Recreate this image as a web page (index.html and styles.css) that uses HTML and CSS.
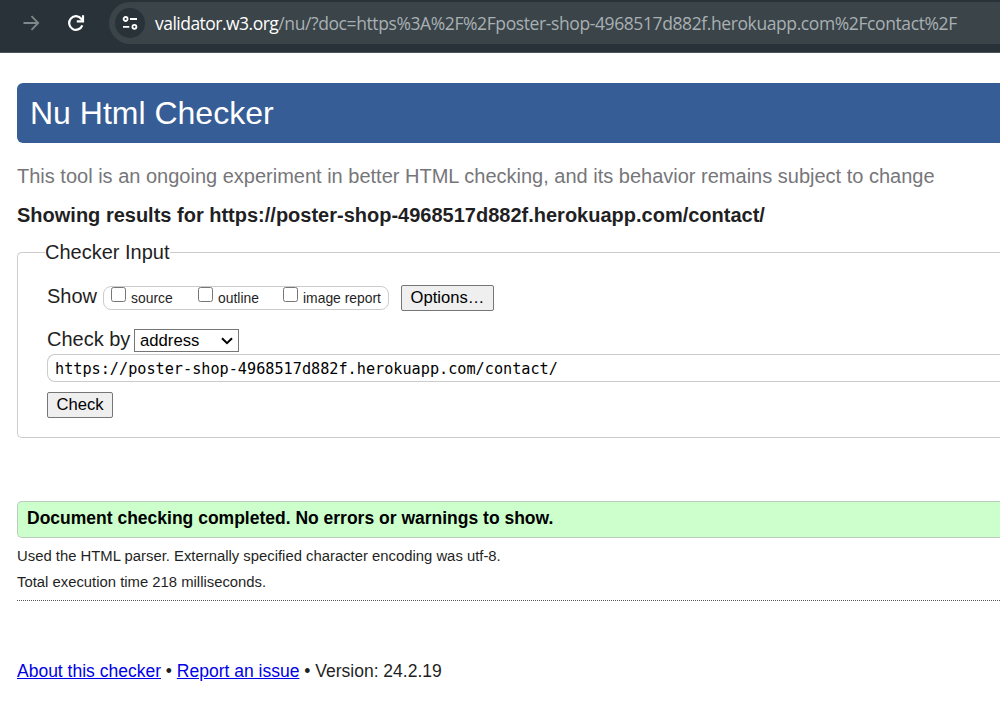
FILE: index.html
```
<!DOCTYPE html>
<html lang="en">
<head>
<meta charset="utf-8">
<title>Nu Html Checker</title>
<link rel="stylesheet" href="styles.css">
</head>
<body>
<div class="toolbar">
  <svg class="nav-icon" width="20" height="20" viewBox="0 0 20 20" fill="none" stroke="#7f878b" stroke-width="1.8"><path d="M2.5 10H17M10.5 3.2L17.2 10L10.5 16.8"/></svg>
  <svg class="nav-icon reload" width="20" height="20" viewBox="0 0 20 20" fill="none" stroke="#fff" stroke-width="2.2"><path d="M16.3 12.3A6.8 6.8 0 1 1 15.4 6L16.2 7.2"/><path d="M17 2.2V8.3H10.8"/></svg>
  <div class="omnibox">
    <span class="site-info"><svg width="18" height="18" viewBox="0 0 18 18" fill="none" stroke="#fff" stroke-width="1.8"><circle cx="4.6" cy="5" r="2"/><path d="M9 5H16M2 12.8H8.3"/><circle cx="13.4" cy="12.8" r="2"/></svg></span>
    <span class="url"><span class="host">validator.w3.org</span><span class="path">/nu/?doc=https%3A%2F%2Fposter-shop-4968517d882f.herokuapp.com%2Fcontact%2F</span></span>
  </div>
</div>
<main class="page">
  <h1 class="banner">Nu Html Checker</h1>
  <p class="tagline">This tool is an ongoing experiment in better HTML checking, and its behavior remains subject to change</p>
  <h2 class="results-for">Showing results for https://poster-shop-4968517d882f.herokuapp.com/contact/</h2>
  <fieldset class="checker">
    <legend class="legend">Checker Input</legend>
    <div class="show-row">
      <span class="show-label">Show</span>
      <div class="options">
        <label class="option source"><input class="box" type="checkbox"><span class="option-text">source</span></label>
        <label class="option outline"><input class="box" type="checkbox"><span class="option-text">outline</span></label>
        <label class="option"><input class="box" type="checkbox"><span class="option-text">image report</span></label>
      </div>
      <button class="button options-button">Options…</button>
    </div>
    <div class="by-row">
      <span class="by-label">Check by</span>
      <div class="select"><span>address</span><svg width="12" height="8" viewBox="0 0 12 8" fill="none" stroke="#000" stroke-width="2"><path d="M1 1.2L6 6.2L11 1.2"/></svg></div>
    </div>
    <div class="address">https://poster-shop-4968517d882f.herokuapp.com/contact/</div>
    <button class="button check-button">Check</button>
  </fieldset>
  <p class="success">Document checking completed. No errors or warnings to show.</p>
  <p class="detail">Used the HTML parser. Externally specified character encoding was utf-8.</p>
  <p class="detail">Total execution time 218 milliseconds.</p>
  <hr class="rule">
  <footer class="footer"><a class="link" href="#">About this checker</a> • <a class="link" href="#">Report an issue</a> • Version: 24.2.19</footer>
</main>
</body>
</html>
```
FILE: styles.css
```
* { box-sizing: border-box; }
body {
  margin: 0;
  height: 712px;
  overflow: hidden;
  background: #fff;
  color: #1f1f24;
  font-family: "Liberation Sans", Arial, sans-serif;
}
.toolbar {
  display: flex;
  align-items: flex-start;
  height: 53px;
  padding: 2px 0 0 21px;
  background: #283238;
  border-bottom: 1px solid #4b555a;
}
.nav-icon { flex: none; margin-top: 11px; }
.reload { margin-left: 25px; }
.omnibox {
  display: flex;
  align-items: center;
  flex: 1;
  height: 42px;
  margin-left: 23px;
  padding-left: 6px;
  border-radius: 21px 0 0 21px;
  background: #3a4449;
}
.site-info {
  display: flex;
  align-items: center;
  justify-content: center;
  flex: none;
  width: 30px;
  height: 30px;
  border-radius: 50%;
  background: #283238;
}
.url {
  margin-left: 10px;
  font: 17.5px/24px "Open Sans", sans-serif;
  white-space: nowrap;
}
.host { color: #fff; letter-spacing: -0.52px; }
.path { color: #a9b0b3; letter-spacing: -0.4px; }
.page { padding: 30px 0 0 17px; }
.banner {
  height: 60px;
  margin: 0;
  padding-left: 13px;
  border-radius: 6px 0 0 6px;
  background: #365d95;
  color: #fff;
  font-size: 32px;
  font-weight: 400;
  line-height: 60px;
}
.tagline {
  margin: 21px 0 0;
  color: #76767a;
  font-size: 20px;
  line-height: 24px;
  white-space: nowrap;
}
.results-for {
  margin: 15px 0 0;
  font-size: 20px;
  line-height: 24px;
  white-space: nowrap;
}
.checker {
  height: 198px;
  margin: 13px 0 0;
  padding: 0 0 0 29px;
  border: 1px solid #ccc;
  border-right: 0;
  border-radius: 5px 0 0 5px;
}
.legend {
  height: 24px;
  margin-left: -2px;
  padding: 0;
  font-size: 20px;
  line-height: 24px;
}
.show-row { display: flex; align-items: flex-start; height: 64px; padding-top: 21px; }
.show-label { width: 56px; font-size: 20px; line-height: 23px; }
.options {
  display: flex;
  width: 286px;
  height: 24px;
  margin-top: 1px;
  padding-left: 7px;
  border: 1px solid #ccc;
  border-radius: 8px;
}
.option { display: flex; font-size: 13.9px; white-space: nowrap; }
.source { width: 87px; }
.outline { width: 85px; }
.box { width: 15px; height: 15px; margin: 0 5px 0 0; }
.option-text { line-height: 23px; }
.button {
  height: 26px;
  padding: 0;
  border: 1px solid #767676;
  border-radius: 2px;
  background: #efefef;
  color: #000;
  font: 16.6px/22px "Liberation Sans", Arial, sans-serif;
}
.options-button { width: 93px; margin-left: 12px; }
.by-row { display: flex; height: 26px; }
.by-label { width: 87px; font-size: 20px; line-height: 23px; }
.select {
  display: flex;
  align-items: center;
  justify-content: space-between;
  width: 105px;
  height: 23px;
  margin-top: 1px;
  padding: 0 5px;
  border: 1px solid #767676;
  color: #000;
  font-size: 16.7px;
}
.address {
  height: 28px;
  padding-left: 7px;
  border: 1px solid #ccc;
  border-right: 0;
  border-radius: 8px 0 0 8px;
  color: #000;
  font: 15.2px/28px "DejaVu Sans Mono", monospace;
}
.check-button { display: block; width: 66px; margin-top: 10px; }
.success {
  height: 37px;
  margin: 63px 0 0;
  padding-left: 9px;
  border: 1px solid #bcccbc;
  border-right: 0;
  border-radius: 5px 0 0 5px;
  background: #cfc;
  color: #000;
  font-size: 17.5px;
  font-weight: 700;
  line-height: 33px;
}
.detail { margin: 5px 0 0; font-size: 14.85px; line-height: 26px; }
.detail + .detail { margin: 0; }
.rule { height: 1px; margin: 5px 0 0; border: 0; border-top: 1px dotted #555; }
.footer { margin-top: 59px; font-size: 17.5px; line-height: 22px; }
.link { color: #0000e8; }
```
